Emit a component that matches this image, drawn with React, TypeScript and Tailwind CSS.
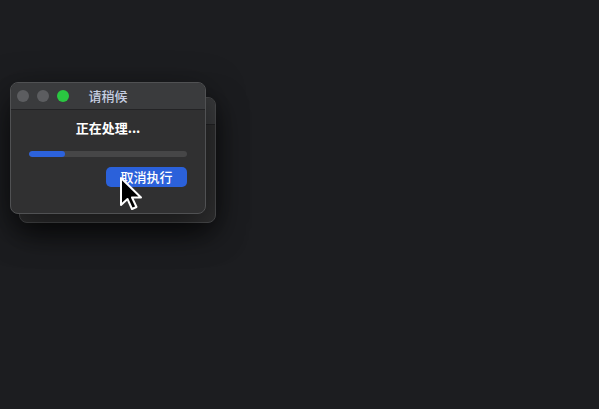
import React from 'react'

const font = { fontFamily: '"Noto Sans CJK SC", "Liberation Sans", sans-serif' }

function Cursor() {
  return (
    <svg
      className="absolute left-[118px] top-[176px]"
      width="26"
      height="36"
      viewBox="0 0 26 36"
    >
      <path
        d="M3 2 L3 29 L9.5 23 L14 33 L18.5 31 L14 21.5 L23 21.5 Z"
        fill="#000"
        stroke="#fff"
        strokeWidth="2"
        strokeLinejoin="round"
      />
    </svg>
  )
}

function TrafficLights() {
  return (
    <div className="flex items-center gap-[8px]">
      <span className="w-3 h-3 rounded-full bg-[#5c5d60]" />
      <span className="w-3 h-3 rounded-full bg-[#5c5d60]" />
      <span className="w-3 h-3 rounded-full bg-[#2ac741]" />
    </div>
  )
}

export default function App() {
  return (
    <div className="relative w-[599px] h-[409px] bg-[#1c1d20] overflow-hidden" style={font}>
      {/* window behind */}
      <div className="absolute left-[19px] top-[97px] w-[197px] h-[126px] rounded-[8px] border border-[#4a4b4d] bg-[#2f2f30] shadow-[0_10px_30px_rgba(0,0,0,0.6)] overflow-hidden flex flex-col">
        <div className="h-[27px] bg-[#3a3b3d] border-b border-[#232325]" />
      </div>

      {/* front window */}
      <div className="absolute left-[10px] top-[82px] w-[196px] h-[132px] rounded-[8px] border border-[#505153] bg-[#303031] shadow-[0_12px_36px_rgba(0,0,0,0.55)] overflow-hidden flex flex-col">
        <div className="relative h-[27px] shrink-0 bg-[#3a3b3d] border-b border-[#232325] flex items-center px-[6px]">
          <TrafficLights />
          <span className="absolute inset-0 flex items-center justify-center text-[13px] font-medium text-[#c6cde0]">
            请稍候
          </span>
        </div>
        <div className="flex flex-col items-center px-[18px] pt-[10px]">
          <div className="text-[13px] font-bold leading-[16px] text-white">正在处理...</div>
          <div className="mt-[15px] w-full h-[6px] rounded-full bg-[#464647] overflow-hidden">
            <div className="h-full w-[23%] rounded-full bg-[#2c62dc]" />
          </div>
          <div className="mt-[10px] w-full flex justify-end">
            <button className="w-[81px] h-[20px] rounded-[5px] bg-[#2b61da] text-[13px] font-medium leading-[20px] text-white">
              取消执行
            </button>
          </div>
        </div>
      </div>

      <Cursor />
    </div>
  )
}
